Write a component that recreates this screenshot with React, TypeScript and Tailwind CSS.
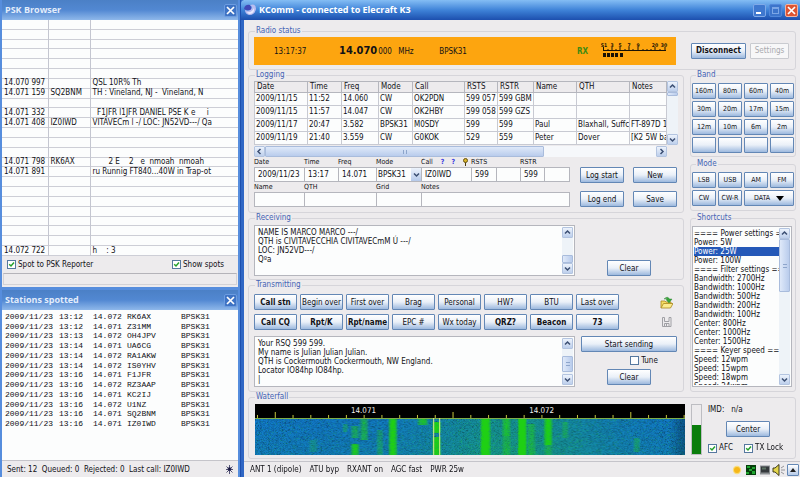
import { useEffect, useRef } from 'react';
import type { ReactNode } from 'react';
import clsx from 'clsx';

const browserRows: Record<number, [string, string, string]> = {
  6: ['14.070 997', '', 'QSL 10R% Th'],
  7: ['14.071 159', 'SQ2BNM', 'TH : Vineland, NJ -  Vineland, N'],
  9: ['14.071 332', '', '  F1JFR l1JFR DANIEL PSE K e     i'],
  10: ['14.071 408', 'IZ0IWD', 'VITAVECm l -/ LOC: JN52VD---/ Qa'],
  14: ['14.071 798', 'RK6AX', '       2 E    2   e  nmoah  nmoah'],
  15: ['14.071 891', '', 'ru Runnig FT840...40W in Trap-ot'],
  23: ['14.072 722', '', 'h    : 3'],
};

const stations: [string, string, string][] = [
  ['13:12', '14.072', 'RK6AX'],
  ['13:12', '14.071', 'Z31MM'],
  ['13:13', '14.072', 'OH4JPV'],
  ['13:14', '14.071', 'UA6CG'],
  ['13:14', '14.072', 'RA1AKW'],
  ['13:14', '14.072', 'IS0YHV'],
  ['13:16', '14.071', 'F1JFR'],
  ['13:16', '14.072', 'RZ3AAP'],
  ['13:16', '14.071', 'KC2IJ'],
  ['13:16', '14.072', 'U1NZ'],
  ['13:16', '14.071', 'SQ2BNM'],
  ['13:16', '14.071', 'IZ0IWD'],
];

const logHead = ['Date', 'Time', 'Freq', 'Mode', 'Call', 'RSTS', 'RSTR', 'Name', 'QTH', 'Notes'];
const logRows = [
  ['2009/11/15', '11:52', '14.060', 'CW', 'OK2PDN', '599 057', '599 GBM', '', '', ''],
  ['2009/11/15', '11:57', '14.047', 'CW', 'OK2HBY', '599 058', '599 GZS', '', '', ''],
  ['2009/11/17', '20:47', '3.582', 'BPSK31', 'M0SDY', '599', '599', 'Paul', 'Blaxhall, Suffc', 'FT-897D 1'],
  ['2009/11/19', '21:40', '3.559', 'CW', 'G0KOK', '529', '559', 'Peter', 'Dover', '[K2 5W ba'],
];

const bands = ['160m', '80m', '60m', '40m', '30m', '20m', '17m', '15m', '12m', '10m', '6m', '2m', '', '', '', ''];

const macros: [string, boolean][] = [
  ['Call stn', true], ['Begin over', false], ['First over', false], ['Brag', false],
  ['Personal', false], ['HW?', false], ['BTU', false], ['Last over', false],
  ['Call CQ', true], ['Rpt/K', true], ['Rpt/name', true], ['EPC #', false],
  ['Wx today', false], ['QRZ?', true], ['Beacon', true], ['73', true],
];

const shortcuts = [
  '==== Power settings ==', 'Power: 5W', 'Power: 25W', 'Power: 100W',
  '==== Filter settings ==', 'Bandwidth: 2700Hz', 'Bandwidth: 1000Hz', 'Bandwidth: 500Hz',
  'Bandwidth: 200Hz', 'Bandwidth: 100Hz', 'Center: 800Hz', 'Center: 1000Hz', 'Center: 1500Hz',
  '==== Keyer speed ===', 'Speed: 12wpm', 'Speed: 15wpm', 'Speed: 18wpm', 'Speed: 24wpm',
];

function Btn({ children, className, label, disabled }: { children?: ReactNode; className?: string; label?: string; disabled?: boolean }) {
  return (
    <button
      type="button"
      aria-label={label}
      disabled={disabled}
      className={clsx(
        'flex h-4 items-center justify-center overflow-hidden rounded-[1px] border whitespace-nowrap',
        disabled
          ? 'border-[#c9cbd0] bg-[#f7f7f8] text-[#a9a9ae]'
          : 'border-[#6387b5] bg-linear-to-b from-white via-[#eaf0f8] to-[#9db9de] text-[#111116]',
        className,
      )}
    >
      {children}
    </button>
  );
}

function Group({ title, className, narrow, children }: { title: string; className?: string; narrow?: boolean; children: ReactNode }) {
  return (
    <fieldset className={clsx('min-w-0 rounded-[3px] border border-[#d6d5da]', narrow ? 'px-px' : 'px-[5px]', className)}>
      <legend className={clsx('h-[10px] px-px leading-[10px] text-[#4463b4]', narrow ? 'ml-1' : 'ml-px')}>{title}</legend>
      {children}
    </fieldset>
  );
}

function Chevron({ dir }: { dir: 'up' | 'down' | 'left' | 'right' }) {
  const d = { up: 'M1 4.5 3.5 2 6 4.5', down: 'M1 2.5 3.5 5 6 2.5', left: 'M4.5 1 2 3.5 4.5 6', right: 'M2.5 1 5 3.5 2.5 6' }[dir];
  return (
    <svg viewBox="0 0 7 7" className="size-[7px]" fill="none" stroke="#3c4f73" strokeWidth="1.5">
      <path d={d} />
    </svg>
  );
}

function ScrollButton({ dir, label }: { dir: 'up' | 'down' | 'left' | 'right'; label: string }) {
  return (
    <button
      type="button"
      aria-label={label}
      className="flex size-[11px] shrink-0 items-center justify-center rounded-[1px] border border-[#b3c4e0] bg-linear-to-b from-[#edf3fc] to-[#bdcfec]"
    >
      <Chevron dir={dir} />
    </button>
  );
}

function VScroll({ before, thumb, grip }: { before: string; thumb: string; grip?: boolean }) {
  return (
    <div className="flex w-[11px] shrink-0 flex-col bg-[#eef3f8]">
      <ScrollButton dir="up" label="Scroll up" />
      <div className={before} />
      <div className={clsx('flex items-center justify-center rounded-[1px] border border-[#a9bcdc] bg-linear-to-r from-[#dfe9f9] to-[#b9ccec]', thumb)}>
        {grip && <span className="h-1 w-1 border-y border-[#8da5cb]" />}
      </div>
      <div className="flex-1" />
      <ScrollButton dir="down" label="Scroll down" />
    </div>
  );
}

function Check({ children, checked }: { children: ReactNode; checked?: boolean }) {
  return (
    <label className="flex items-center gap-[2px]">
      <span className="grid size-[9px]">
        <input type="checkbox" defaultChecked={checked} className="peer col-start-1 row-start-1 size-[9px] appearance-none border border-[#56789f] bg-white" />
        <svg viewBox="0 0 9 9" className="pointer-events-none col-start-1 row-start-1 hidden size-[9px] peer-checked:block" fill="none" stroke="#25a02c" strokeWidth="1.5">
          <path d="M2.2 4.2 4 6 7 2.6" />
        </svg>
      </span>
      {children}
    </label>
  );
}

function PaneTitle({ children }: { children: ReactNode }) {
  return (
    <header className="flex h-5 items-center justify-between bg-linear-to-b from-[#4b80c6] via-[#5288d2] to-[#8fb8ea] pr-px pl-[3px]">
      <h2 className="font-['Open_Sans',sans-serif] text-[9px] leading-3 font-bold text-[#e3edfb]">{children}</h2>
      <button type="button" aria-label="Close" className="flex size-[13px] items-center justify-center rounded-[2px] border border-[#6c9ce0] bg-[#3e73c4]">
        <svg viewBox="0 0 9 9" className="size-[9px]" stroke="#fff" strokeWidth="1.7">
          <path d="M1 1 8 8M8 1 1 8" />
        </svg>
      </button>
    </header>
  );
}

function PskBrowser() {
  return (
    <section className="border-x-[2px] border-b-[3px] border-[#568ddd] bg-[#edebed]">
      <PaneTitle>PSK Browser</PaneTitle>
      <table className="h-[236px] w-full table-fixed border-collapse bg-[#fcfdfd]">
        <colgroup>
          <col className="w-[46px]" />
          <col className="w-[42px]" />
          <col />
        </colgroup>
        <tbody>
          {Array.from({ length: 24 }, (_, i) => {
            const row = browserRows[i] ?? ['', '', ''];
            return (
              <tr key={i} className="border-b border-[#cdced6]">
                {row.map((cell, c) => (
                  <td key={c} className={clsx('py-0 pr-0 pl-[2px] leading-[8px] whitespace-pre', c < 2 && 'border-r border-[#c4c6d0]')}>
                    {cell || '\u00a0'}
                  </td>
                ))}
              </tr>
            );
          })}
        </tbody>
      </table>
      <div className="flex h-[17px] items-center justify-between pr-[14px] pl-[5px]">
        <Check checked>Spot to PSK Reporter</Check>
        <Check checked>Show spots</Check>
      </div>
      <div className="mx-px mb-[2px] h-3 border border-[#d3d2d6] border-t-[#b4b3b9]" />
    </section>
  );
}

function StationsSpotted() {
  return (
    <section className="flex flex-1 flex-col border-x-[2px] border-[#568ddd] bg-[#edebed]">
      <PaneTitle>Stations spotted</PaneTitle>
      <div className="flex-1 bg-[#fcfdfd] pt-[2px]">
        <table className="h-[117px] w-[222px] table-fixed border-collapse font-['Liberation_Mono',monospace]">
          <colgroup>
            <col className="w-[57px]" />
            <col className="w-[34px]" />
            <col className="w-[34px]" />
            <col className="w-[54px]" />
            <col />
          </colgroup>
          <tbody>
            {stations.map(([time, freq, call], i) => (
              <tr key={i}>
                {['2009/11/23', time, freq, call, 'BPSK31'].map((cell, c) => (
                  <td key={c} className={clsx('py-0 pr-0 leading-[8px]', c === 0 ? 'pl-[3px]' : 'pl-0')}>
                    {cell}
                  </td>
                ))}
              </tr>
            ))}
          </tbody>
        </table>
      </div>
      <footer className="flex h-[17px] items-center justify-between border-t border-[#c5c4ca] pr-1 pl-[5px]">
        <span className="whitespace-pre">Sent: 12  Queued: 0  Rejected: 0  Last call: IZ0IWD</span>
        <svg viewBox="0 0 9 9" className="size-[9px]" stroke="#2b2b55" strokeWidth="0.8">
          <path d="M4.5 0v9M1.5 1.5l6 6M7.5 1.5l-6 6M1 4.5h7" />
          <circle cx="4.5" cy="4" r="1.5" fill="#15153c" />
        </svg>
      </footer>
    </section>
  );
}

function SMeter() {
  const marks: [number, string][] = [[3, 'S1'], [11, '3'], [19, '5'], [28, '7'], [37, '9'], [54, '20'], [63, '30']];
  return (
    <svg viewBox="0 0 68 18" className="h-[18px] w-[68px]" fill="#1a1205">
      {marks.map(([x, t]) => (
        <text key={t} x={x} y="5" fontSize="5" fontWeight="700" textAnchor="middle">{t}</text>
      ))}
      <path d="M2 8.5H65M2.5 5v4M7 7v2M11 5v4M15 7v2M19 5v4M24 7v2M28 5v4M32 7v2M37 5v4M42 7v2M46 7v2M50 7v2M54 5v4M59 7v2M64 5v4" stroke="#1a1205" fill="none" />
      <path d="M2 11h3v4h-3zM6 11h3v4h-3zM10 11h3v4h-3zM14 11h3v4h-3zM19 11h3v4h-3z" />
    </svg>
  );
}

function RadioStatus() {
  return (
    <Group title="Radio status" className="pb-1">
      <div className="flex w-full items-center">
        <div className="mt-px flex h-7 min-w-0 flex-1 items-center bg-[#fda50f] pr-[7px] pl-5">
          <span className="w-[65px]">13:17:37</span>
          <span className="text-[11px] leading-4 font-bold">14.070</span>
          <span className="w-[21px] pl-px">000</span>
          <span className="w-[41px]">MHz</span>
          <span className="flex-1">BPSK31</span>
          <span className="w-6 font-bold text-[#3f8a12]">RX</span>
          <SMeter />
        </div>
        <Btn className="ml-[15px] w-[55px] font-bold">Disconnect</Btn>
        <Btn disabled className="mr-px ml-1 w-[39px]">Settings</Btn>
      </div>
    </Group>
  );
}

const logWidths = ['w-[53px]', 'w-[34px]', 'w-[37px]', 'w-[34px]', 'w-[52px]', 'w-[33px]', 'w-[36px]', 'w-[43px]', 'w-[53px]', ''];

function LogTable() {
  return (
    <div className="mt-px">
      <div className="flex h-[64px]">
        <div className="min-w-0 flex-1">
          <table className="h-[64px] w-full table-fixed border-collapse border border-[#b5b6bd] bg-[#fcfdfd]">
            <colgroup>
              {logWidths.map((w, i) => <col key={i} className={w} />)}
            </colgroup>
            <thead>
              <tr>
                {logHead.map((h) => (
                  <th key={h} className="border border-[#b5b6bd] bg-[#edebed] py-0 pr-0 pl-[2px] text-left leading-[10px] font-normal">{h}</th>
                ))}
              </tr>
            </thead>
            <tbody>
              {logRows.map((row, r) => (
                <tr key={r}>
                  {row.map((cell, c) => (
                    <td key={c} className="overflow-hidden border border-[#c8cad2] py-0 pr-0 pl-px leading-[10px] whitespace-nowrap">{cell}</td>
                  ))}
                </tr>
              ))}
            </tbody>
          </table>
        </div>
        <VScroll before="h-0" thumb="h-1" />
      </div>
      <div className="mt-px mr-[11px] flex h-[11px] bg-[#f6f8fb]">
        <ScrollButton dir="left" label="Scroll left" />
        <div className="flex w-[279px] items-center justify-center rounded-[1px] border border-[#a9bcdc] bg-linear-to-b from-[#dfe9f9] to-[#b9ccec]">
          <span className="h-1 w-1 border-x border-[#8da5cb]" />
        </div>
        <div className="flex-1" />
        <ScrollButton dir="right" label="Scroll right" />
      </div>
    </div>
  );
}

const labelStyle = 'flex h-[10px] items-center text-[7px] leading-[10px] whitespace-nowrap';

function Field({ id, label, value, width }: { id: string; label: ReactNode; value?: string; width: string }) {
  return (
    <div className={clsx('-mr-px', width)}>
      <label htmlFor={id} className={labelStyle}>{label}</label>
      <input id={id} defaultValue={value} className="h-[15px] w-full min-w-0 border border-[#b5b6bd] bg-[#fcfdfd] px-[3px]" />
    </div>
  );
}

function LogEntry() {
  return (
    <div className="flex gap-[10px]">
      <div className="w-[316px]">
        <div className="flex pr-px">
          <Field id="date" label="Date" value="2009/11/23" width="w-[51px]" />
          <Field id="time" label="Time" value="13:17" width="w-[35px]" />
          <Field id="freq" label="Freq" value="14.071" width="w-[39px]" />
          <div className="-mr-px w-[46px]">
            <label htmlFor="mode" className={labelStyle}>Mode</label>
            <div className="flex h-[15px] items-center border border-[#b5b6bd] bg-[#fcfdfd]">
              <select id="mode" className="min-w-0 flex-1 appearance-none pl-px">
                <option>BPSK31</option>
              </select>
              <span className="flex h-[13px] w-[10px] items-center justify-center bg-linear-to-b from-[#edf3fc] to-[#b5c9ea]">
                <Chevron dir="down" />
              </span>
            </div>
          </div>
          <Field
            id="call"
            label={
              <>
                Call
                <span className="ml-2 font-bold text-[#3a3ae0]">?</span>
                <span className="ml-[7px] font-bold text-[#3a3ae0]">?</span>
                <svg viewBox="0 0 5 8" className="ml-2 h-2 w-[5px]">
                  <circle cx="2.5" cy="2.5" r="2" fill="#d9b52a" stroke="#6b5510" />
                  <path d="M2.5 4.5V8" stroke="#4d3d0c" />
                </svg>
              </>
            }
            value="IZ0IWD"
            width="w-[51px]"
          />
          <Field id="rsts" label="RSTS" value="599" width="w-[26px]" />
          <Field id="serial-sent" label="" width="w-[25px]" />
          <Field id="rstr" label="RSTR" value="599" width="w-[25px]" />
          <Field id="serial-received" label="" width="w-[26px]" />
        </div>
        <div className="flex pr-px">
          <Field id="name" label="Name" width="w-[51px]" />
          <Field id="qth" label="QTH" width="w-[73px]" />
          <Field id="grid" label="Grid" width="w-[46px]" />
          <Field id="notes" label="Notes" width="w-[149px]" />
        </div>
      </div>
      <div className="grid grid-cols-2 gap-x-[9px] gap-y-2 pt-[10px]">
        <Btn className="w-[44px]">Log start</Btn>
        <Btn className="w-[44px]">New</Btn>
        <Btn className="w-[44px]">Log end</Btn>
        <Btn className="w-[44px]">Save</Btn>
      </div>
    </div>
  );
}

function TextPane({ label, text, before, thumb, grip }: { label: string; text: string; before: string; thumb: string; grip?: boolean }) {
  return (
    <div className="flex h-[51px] w-[321px] border border-[#b5b6bd] bg-[#fcfdfd] p-px">
      <textarea aria-label={label} defaultValue={text} className="min-w-0 flex-1 resize-none overflow-hidden py-px pl-[2px] leading-[9px]" />
      <VScroll before={before} thumb={thumb} grip={grip} />
    </div>
  );
}

function Transmitting() {
  return (
    <Group title="Transmitting" className="h-[112px]">
      <div className="flex pt-1">
        <div className="grid grid-cols-8 gap-x-[3px] gap-y-1">
          {macros.map(([name, bold]) => (
            <Btn key={name} className={clsx('w-[43px]', bold && 'font-bold')}>{name}</Btn>
          ))}
        </div>
        <div className="flex flex-1 flex-col items-end justify-between py-[2px] pr-[5px]">
          <button type="button" aria-label="Open file">
            <svg viewBox="0 0 13 13" className="size-[13px]">
              <path d="M1 12V5h4l1 1h5v2" fill="#f4dc62" stroke="#a8871c" strokeWidth=".8" />
              <path d="M1 12 3.5 7.5H13L10.5 12z" fill="#fbeb8e" stroke="#a8871c" strokeWidth=".8" />
              <path d="M4 3Q7.5-.5 9.5 3H12L9 7 6 3.5H7.5Q6.5 2 4 3z" fill="#38a63a" stroke="#1e7a24" strokeWidth=".4" />
            </svg>
          </button>
          <button type="button" aria-label="Save file">
            <svg viewBox="0 0 13 12" className="h-3 w-[13px]" fill="none" stroke="#a0a0a5">
              <path d="M2.5 1.5V10.5H11V1.5M4.5 1.5V5.5H9V1.5M4.5 10.5V7.5H9V10.5M6.5 8V10.5M2.5 1.5H4.5M9 1.5H11" />
            </svg>
          </button>
        </div>
      </div>
      <div className="flex gap-[6px] pt-[6px]">
        <TextPane
          label="Transmit text"
          text={'Your RSQ 599 599.\nMy name is Julian Julian Julian.\nQTH is Cockermouth Cockermouth, NW England.\nLocator IO84hp IO84hp.\n|'}
          before="h-[7px]"
          thumb="h-[16px]"
          grip
        />
        <div className="flex w-[96px] flex-col items-center">
          <Btn className="w-full">Start sending</Btn>
          <div className="flex h-[17px] items-center pl-[30px]">
            <Check>Tune</Check>
          </div>
          <Btn className="w-[44px]">Clear</Btn>
        </div>
      </div>
    </Group>
  );
}

/* [centre, half width, strength, from, to] in waterfall pixels */
const signals: [number, number, number, number, number][] = [
  [138, 3, 0.9, 0, 37],
  [109, 3, 0.5, 0, 22],
  [100, 3, 0.45, 8, 20],
  [100, 3, 0.8, 26, 37],
  [125, 2, 0.3, 12, 37],
  [90, 1, 0.3, 6, 14],
  [58, 3, 0.2, 22, 34],
  [168, 4, 0.65, 0, 7],
  [182, 3, 0.8, 4, 15],
  [182, 3, 0.75, 19, 37],
  [231, 4, 0.85, 0, 37],
  [252, 3, 0.45, 0, 18],
  [252, 3, 0.3, 18, 37],
  [268, 3, 1, 0, 37],
  [277, 3, 0.3, 6, 37],
  [294, 3, 0.7, 0, 27],
  [294, 3, 0.25, 27, 37],
  [311, 2, 0.25, 4, 20],
  [383, 2, 0.3, 20, 34],
];

function Waterfall() {
  const ref = useRef<HTMLCanvasElement>(null);
  useEffect(() => {
    const ctx = ref.current?.getContext('2d');
    if (!ctx) return;
    const w = 432;
    const h = 37;
    const img = ctx.createImageData(w, h);
    let seed = 7;
    const rnd = () => {
      seed = (seed * 1664525 + 1013904223) % 4294967296;
      return seed / 4294967296;
    };
    for (let y = 0; y < h; y++) {
      for (let x = 0; x < w; x++) {
        const n = rnd();
        const tint = 0.1 + 0.24 * Math.exp(-(((x - 260) / 90) ** 2)) + (y / h) * 0.06;
        let g = tint + (rnd() < 0.1 ? 0.14 : 0);
        for (const [c, hw, s, a, b] of signals) {
          const d = Math.abs(x - c);
          if (y >= a && y < b && d <= hw + 1) g += s * (1 - (d / (hw + 2)) ** 2) * (0.8 + 0.3 * rnd());
        }
        g = Math.min(1, g);
        const edge = x < 415 ? 1 : 1 - ((x - 415) / 17) * 0.35;
        const k = (0.84 + 0.26 * n) * edge * (rnd() < 0.07 ? 0.75 : 1);
        const lum = k + (0.98 - k) * g;
        const i = (y * w + x) * 4;
        img.data[i] = (14 + 18 * g) * lum;
        img.data[i + 1] = (104 + 108 * g) * lum;
        img.data[i + 2] = (210 - 190 * g) * lum;
        img.data[i + 3] = 255;
      }
    }
    ctx.putImageData(img, 0, 0);
    ctx.fillStyle = '#7fae4a';
    ctx.fillRect(0, 0, w, 1);
    ctx.fillStyle = '#e2f08c';
    ctx.fillRect(179, 0, 1, h);
    ctx.fillRect(185, 0, 1, h);
  }, []);

  return (
    <div className="min-w-0 flex-1 bg-black">
      <svg viewBox="0 0 432 14" className="h-[14px] w-full">
        {Array.from({ length: 25 }, (_, i) => {
          const x = 2.5 + i * 17.86;
          return <path key={i} d={`M${x} ${i % 10 === 1 ? 8 : 11}V14`} stroke="#c8c83c" />;
        })}
        <text x="109" y="9" fontSize="8" fill="#f0f0f0" textAnchor="middle">14.071</text>
        <text x="288" y="9" fontSize="8" fill="#f0f0f0" textAnchor="middle">14.072</text>
      </svg>
      <canvas ref={ref} width={432} height={37} className="h-[37px] w-full" />
    </div>
  );
}

function StatusBar() {
  return (
    <footer className="flex h-4 items-center gap-2 border-t border-[#c5c4ca] pr-px pl-[6px]">
      <span>ANT 1 (dipole)</span>
      <span>ATU byp</span>
      <span>RXANT on</span>
      <span>AGC fast</span>
      <span className="flex-1">PWR 25w</span>
      <svg viewBox="0 0 60 12" className="h-3 w-[60px]">
        <circle cx="10" cy="6" r="4.2" fill="#f8dc7c" />
        <circle cx="10" cy="6" r="3" fill="#f6b719" />
        <path d="M19 1h10v10H19z" fill="#053c0a" />
        <path d="M20 2h3v2h-3zM25 3h3v2h-3zM22 5h3v2h-3zM19 8h3v2h-3zM25 7h3v3h-3z" fill="#1fa52f" />
        <path d="M33 1.5h10v9H33z" fill="#8b8f92" />
        <path d="M34 2.5h8v6h-8z" fill="#35393c" />
        <path d="M35 3.5h4v2h-4z" fill="#5c7262" />
        <path d="M46 4h2l4-3.5v11L48 8h-2z" fill="#e4d54c" stroke="#2e2a0d" strokeWidth=".9" />
        <path d="M54 4l3-2M54 6h4M54 8l3 2" stroke="#8a8a90" strokeWidth=".9" />
      </svg>
      <button type="button" aria-label="Expand" className="-ml-2 flex size-3 items-center justify-center rounded-[1px] border border-[#6387b5] bg-linear-to-b from-white to-[#b7cbe8]">
        <svg viewBox="0 0 6 4" className="h-1 w-[6px]" fill="#222">
          <path d="M0 4 3 0 6 4z" />
        </svg>
      </button>
    </footer>
  );
}

function MainWindow() {
  return (
    <main className="flex min-w-0 flex-1 flex-col border-l-[3px] border-[#2f66c4] bg-[#edebed]">
      <header className="-ml-[3px] flex h-5 items-center gap-[3px] rounded-tl-[4px] bg-linear-to-b from-[#84bdf4] via-[#3f83d8] to-[#1d4fae] pr-[2px] pl-[3px]">
        <svg viewBox="0 0 12 12" className="size-3">
          <path d="M0 5Q1 0 6 1 8 3 7 6 3 7 0 5z" fill="#4148b8" />
          <path d="M6 1Q12-1 12 5 11 11 5 11 1 10 1 6 6 8 8 4 8 2 6 1z" fill="#b9bdf0" />
          <path d="M3 8Q8 9 10 4 11 9 6 10 4 10 3 8z" fill="#e9ebff" />
        </svg>
        <h1 className="flex-1 font-['Open_Sans',sans-serif] text-[9px] leading-3 font-bold text-white">KComm - connected to Elecraft K3</h1>
        <button type="button" aria-label="Minimize" className="flex size-[13px] items-end rounded-[2px] border border-[#7fa9e8] bg-[#3f78cf] p-[2px]">
          <span className="h-[2px] w-[5px] bg-white" />
        </button>
        <button type="button" aria-label="Maximize" disabled className="flex size-[13px] items-center justify-center rounded-[2px] border border-[#5087da] bg-[#3c74cb]">
          <span className="size-[7px] border border-t-2 border-[#7ba6e6]" />
        </button>
        <button type="button" aria-label="Close window" className="flex size-[13px] items-center justify-center rounded-[2px] border border-[#f0b3a2] bg-[#dd5433]">
          <svg viewBox="0 0 9 9" className="size-[9px]" stroke="#fff" strokeWidth="1.7">
            <path d="M1 1 8 8M8 1 1 8" />
          </svg>
        </button>
      </header>

      <div className="flex flex-1 flex-col pt-[6px] pr-1 pl-1">
        <RadioStatus />
        <div className="flex gap-[6px]">
          <div className="min-w-0 flex-1">
            <Group title="Logging" className="h-[143px]">
              <LogTable />
              <LogEntry />
            </Group>
            <Group title="Receiving" className="h-[67px]">
              <div className="flex gap-[6px] pt-[2px]">
                <TextPane label="Received text" text={'NAME IS MARCO MARCO ---/\nQTH is CIVITAVECCHIA CIVITAVECmM Ú ---/\nLOC: JN52VD---/\nQºa'} before="h-[17px]" thumb="h-[8px]" />
                <div className="flex w-[96px] items-end justify-center">
                  <Btn className="w-[44px]">Clear</Btn>
                </div>
              </div>
            </Group>
            <Transmitting />
          </div>

          <div className="flex w-[106px] flex-col">
            <Group title="Band" narrow className="h-[87px]">
              <div className="grid grid-cols-4 gap-[2px] pt-[3px] text-[7px]">
                {bands.map((b, i) => <Btn key={i} label={b || 'Unused band'}>{b}</Btn>)}
              </div>
            </Group>
            <Group title="Mode" narrow className="mt-[2px] h-[52px]">
              <div className="grid grid-cols-4 gap-[2px] pt-[3px] text-[7px]">
                <Btn>LSB</Btn>
                <Btn>USB</Btn>
                <Btn>AM</Btn>
                <Btn>FM</Btn>
                <Btn>CW</Btn>
                <Btn>CW-R</Btn>
                <Btn className="col-span-2 gap-[6px]">
                  DATA
                  <svg viewBox="0 0 8 5" className="h-[5px] w-2"><path d="M0 0H8L4 5z" /></svg>
                </Btn>
              </div>
            </Group>
            <Group title="Shortcuts" narrow className="mt-[2px] h-[179px]">
              <div className="mt-[3px] mr-[2px] flex h-[161px] border border-[#b5b6bd] bg-[#fcfdfd] p-px">
                <ul role="listbox" aria-label="Shortcuts" className="min-w-0 flex-1 overflow-hidden pt-px">
                  {shortcuts.map((s) => (
                    <li key={s} role="option" aria-selected={s === 'Power: 25W'} className={clsx('h-[9px] leading-[9px] whitespace-nowrap', s === 'Power: 25W' && 'bg-[#2458b8] text-white')}>
                      {s}
                    </li>
                  ))}
                </ul>
                <VScroll before="h-0" thumb="h-[53px]" grip />
              </div>
            </Group>
          </div>
        </div>

        <Group title="Waterfall" className="h-[67px]">
          <div className="flex pt-[2px] pl-px">
            <Waterfall />
            <div className="ml-[6px] flex h-[51px] w-[11px] flex-col justify-end border border-[#bdbdc2]">
              <div className="h-[29px] bg-[#0a7d0c]" />
            </div>
            <div className="ml-[6px] flex w-[82px] flex-col justify-between">
              <span className="leading-[11px] whitespace-pre">IMD:   n/a</span>
              <Btn className="ml-[18px] w-[44px]">Center</Btn>
              <div className="flex gap-[11px] pb-[2px] leading-[10px] whitespace-nowrap">
                <Check checked>AFC</Check>
                <Check checked>TX Lock</Check>
              </div>
            </div>
          </div>
        </Group>
      </div>
      <StatusBar />
    </main>
  );
}

export default function App() {
  return (
    <div className="flex min-h-screen bg-[#2f66c4] font-['DejaVu_Sans_Condensed','DejaVu_Sans',sans-serif] text-[8px] leading-[11px] text-[#111116]">
      <aside className="flex w-[241px] shrink-0 flex-col border-r border-[#1d4fae]">
        <PskBrowser />
        <StationsSpotted />
      </aside>
      <MainWindow />
    </div>
  );
}
